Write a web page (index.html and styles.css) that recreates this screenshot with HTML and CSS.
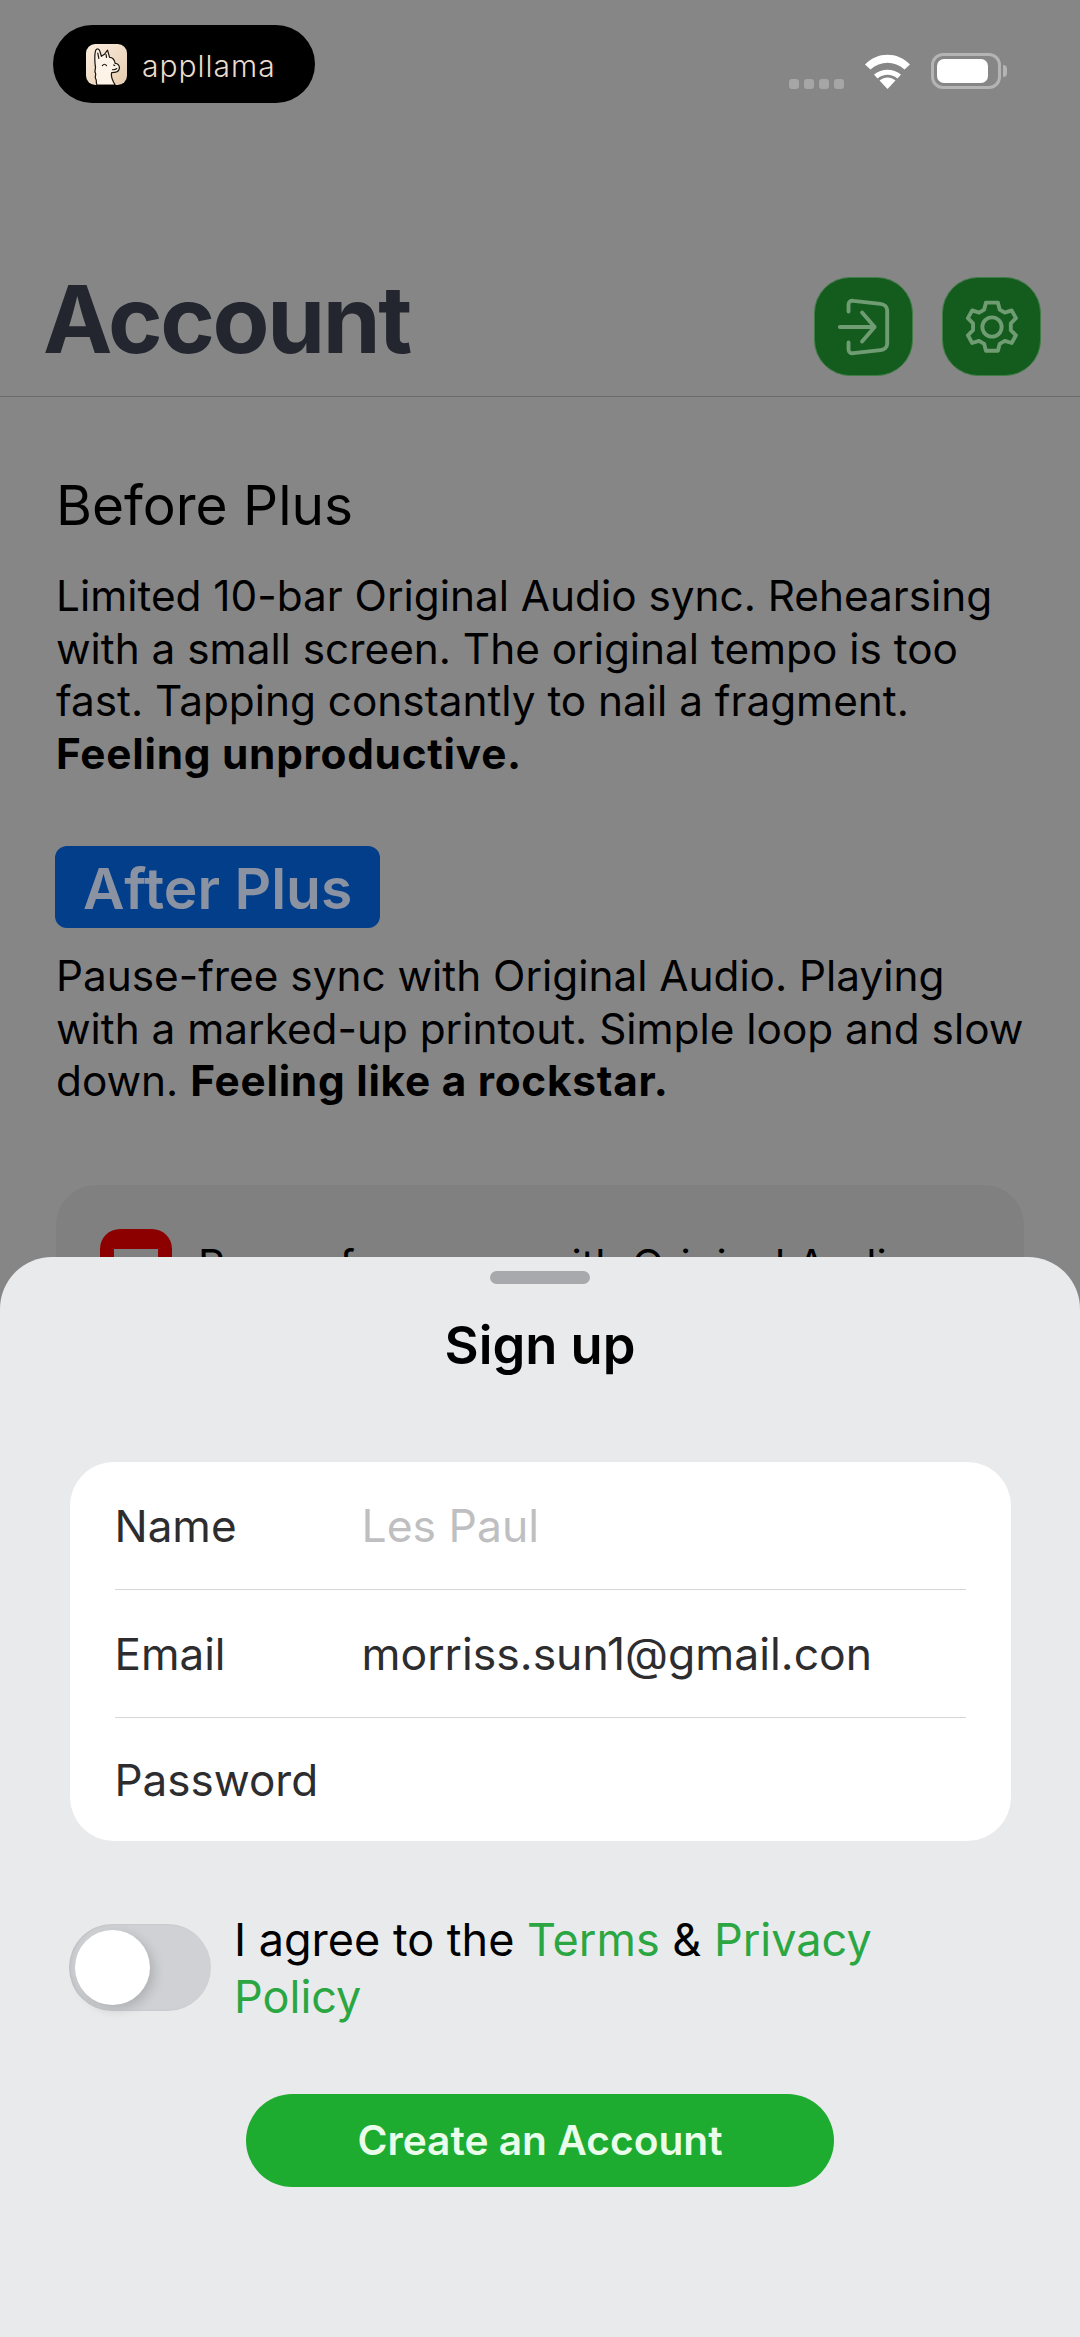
FILE: index.html
```html
<!DOCTYPE html>
<html lang="en">
<head>
    <meta charset="UTF-8">
    <meta name="viewport" content="width=device-width, initial-scale=1.0">
    <title>Account</title>
    <link rel="stylesheet" href="styles.css">
</head>
<body>
    <div class="screen">
        <div class="status">
            <div class="brand">
                <svg class="brand-icon" viewBox="0 0 40 40">
                    <defs>
                        <linearGradient id="tile" x1="0" y1="0" x2="1" y2="1">
                            <stop offset="0" stop-color="#fbeee0"/>
                            <stop offset="1" stop-color="#e6cbad"/>
                        </linearGradient>
                    </defs>
                    <rect width="40" height="40" rx="9" fill="url(#tile)"/>
                    <path d="M11 40C9 38 11 36 9.500 34C8 32 10.500 30 9 28C8 26 10 24 9 21C8.500 16 8.500 11 9 8C9.500 4 12.500 4 13.500 7L15 12L18 10L21 6L23 13C26 13 28 16 28.500 19C31 19 33 21 32.500 24C32 27 28 28 25 28C24 32 26 36 28.500 40Z" fill="#fdf3e6" stroke="#1d1712" stroke-width="1.200" stroke-linejoin="round"/>
                    <path d="M11.500 9L12.500 14M19.500 10L20 13M16 21q2-2.500 4 0M26 25q2 .5 4-1M27 20.500l1 .5" fill="none" stroke="#1d1712" stroke-width="1.200" stroke-linecap="round"/>
                </svg>
                <span class="brand-name">appllama</span>
            </div>
            <div class="status-icons">
                <div class="signal"><i></i><i></i><i></i><i></i></div>
                <svg class="wifi" viewBox="0 0 47 35">
                    <path d="M23.500 35L15.500 26.500C20.500 22.500 26.500 22.500 31.500 26.500Z" fill="#fff"/>
                    <path d="M10 20.500C17.500 14 29.500 14 37 20.500L33.500 24.500C27.300 19.500 19.700 19.500 13.500 24.500Z" fill="#fff"/>
                    <path d="M1 10.500C13.500 -2.500 33.500 -2.500 46 10.500L40.500 15.500C30.500 6.500 16.500 6.500 6.500 15.500Z" fill="#fff"/>
                </svg>
                <div class="battery"><span class="battery-fill"></span></div>
                <span class="battery-cap"></span>
            </div>
        </div>

        <div class="title-bar">
            <h1 class="title">Account</h1>
            <div class="title-actions">
                <div class="round-btn">
                    <svg viewBox="0 0 54 60">
                        <path d="M11 14V7C11 4 13 2.500 16 3L44 6C48 6.500 51 9 51 13V47C51 51 48 53.500 44 54L16 57C13 57.500 11 56 11 53V46" fill="none" stroke="#6f9c72" stroke-width="4" stroke-linecap="round" stroke-linejoin="round"/>
                        <path d="M2 30H38M25 15L38 30L25 45" fill="none" stroke="#6f9c72" stroke-width="4" stroke-linecap="round" stroke-linejoin="round"/>
                    </svg>
                </div>
                <div class="round-btn">
                    <svg viewBox="0 0 56 60">
                        <path d="M21 2H35L37 10L43 13.500L51 11L56 20L50 26V34L56 40L51 49L43 46.500L37 50L35 58H21L19 50L13 46.500L5 49L0 40L6 34V26L0 20L5 11L13 13.500L19 10Z" transform="translate(3 3) scale(.89)" fill="none" stroke="#6f9c72" stroke-width="4.500" stroke-linejoin="round"/>
                        <circle cx="28" cy="30" r="10" fill="none" stroke="#6f9c72" stroke-width="4"/>
                    </svg>
                </div>
            </div>
        </div>

        <div class="content">
            <h2 class="plain-head">Before Plus</h2>
            <p class="copy">Limited 10-bar Original Audio sync. Rehearsing with a small screen. The original tempo is too fast. Tapping constantly to nail a fragment. <b>Feeling unproductive.</b></p>
            <h2 class="badge-head">After Plus</h2>
            <p class="copy">Pause-free sync with Original Audio. Playing with a marked-up printout. Simple loop and slow down. <b>Feeling like a rockstar.</b></p>
            <div class="feature-card">
                <span class="feature-icon"></span>
                <span class="feature-text">Pause-free sync with Original Audio</span>
            </div>
        </div>

        <div class="sheet">
            <div class="handle"></div>
            <h2 class="sheet-title">Sign up</h2>
            <div class="form">
                <div class="form-row">
                    <span class="form-label">Name</span>
                    <span class="form-value placeholder">Les Paul</span>
                </div>
                <div class="form-row">
                    <span class="form-label">Email</span>
                    <span class="form-value">morriss.sun1@gmail.con</span>
                </div>
                <div class="form-row">
                    <span class="form-label">Password</span>
                </div>
            </div>
            <div class="agree">
                <div class="toggle"><span class="knob"></span></div>
                <p class="agree-text">I agree to the <a>Terms</a> &amp; <a>Privacy Policy</a></p>
            </div>
            <button class="create-btn">Create an Account</button>
        </div>
    </div>
</body>
</html>
```

FILE: styles.css
```css
* {
    box-sizing: border-box;
}
body {
    margin: 0;
    font-family: Inter, "Noto Sans", sans-serif;
    background-color: #868686;
}
.screen {
    position: relative;
    width: 1080px;
    height: 2337px;
    overflow: hidden;
    background-color: #868686;
}

/* status bar */
.status {
    display: flex;
    justify-content: space-between;
    align-items: flex-start;
    padding: 25px 73px 0 53px;
    height: 268px;
}
.brand {
    display: flex;
    align-items: center;
    width: 262px;
    height: 78px;
    padding-left: 33px;
    background-color: #000;
    border-radius: 39px;
}
.brand-icon {
    width: 41px;
    height: 41px;
}
.brand-name {
    margin: 4px 0 0 15px;
    font-weight: 300;
    font-size: 30px;
    letter-spacing: 1px;
    color: #e9dccd;
}
.status-icons {
    display: flex;
    align-items: center;
    height: 36px;
    margin-top: 28px;
}
.signal {
    display: flex;
    gap: 5px;
    margin-top: 26px;
    margin-right: 20px;
}
.signal i {
    width: 10px;
    height: 10px;
    border-radius: 3px;
    background-color: #a6a6a6;
}
.wifi {
    width: 47px;
    height: 35px;
    margin-right: 20px;
}
.battery {
    width: 70px;
    height: 36px;
    padding: 3px;
    border: 3px solid #b4b4b4;
    border-radius: 12px;
}
.battery-fill {
    display: block;
    width: 51px;
    height: 100%;
    background-color: #fff;
    border-radius: 7px;
}
.battery-cap {
    width: 4px;
    height: 12px;
    margin-left: 2px;
    background-color: #b4b4b4;
    border-radius: 0 4px 4px 0;
}

/* page title */
.title-bar {
    display: flex;
    justify-content: space-between;
    align-items: flex-end;
    height: 129px;
    padding: 0 39px 20px 43px;
    border-bottom: 1px solid #6b6b6b;
}
.title {
    margin: 0 0 10px;
    font-size: 93px;
    font-weight: 700;
    line-height: 1;
    letter-spacing: -2.4px;
    color: #23262e;
}
.title-actions {
    display: flex;
    gap: 29px;
}
.round-btn {
    display: flex;
    justify-content: center;
    align-items: center;
    width: 99px;
    height: 99px;
    background-color: #145c1e;
    border: 1px solid #3f7d47;
    border-radius: 36px;
}
.round-btn svg {
    width: 54px;
    height: 58px;
}

/* content behind the sheet */
.content {
    padding: 0 48px 0 56px;
}
.plain-head {
    margin: 76px 0 0;
    font-size: 55px;
    font-weight: 400;
    line-height: 64px;
    color: #000;
}
.copy {
    margin: 33px 0 0;
    font-size: 42.300px;
    line-height: 52.500px;
    color: #000;
}
.copy b {
    font-weight: 700;
    letter-spacing: 0.750px;
}
.badge-head {
    display: inline-block;
    margin: 66px 0 0 -1px;
    padding: 3px 28px 0;
    font-size: 57px;
    font-weight: 600;
    line-height: 79px;
    color: #8b93a3;
    background-color: #023e8a;
    border-radius: 12px;
}
.badge-head + .copy {
    margin-top: 22px;
}
.feature-card {
    display: flex;
    gap: 26px;
    margin-top: 77px;
    padding: 44px 0 0 44px;
    height: 200px;
    width: 968px;
    background-color: #808080;
    border-radius: 40px;
}
.feature-icon {
    width: 72px;
    height: 72px;
    border: 14px solid #8d0000;
    border-top-width: 20px;
    border-radius: 20px;
}
.feature-text {
    font-size: 42px;
    line-height: 72px;
    color: #000;
}

/* sign up sheet */
.sheet {
    position: absolute;
    left: 0;
    right: 0;
    top: 1257px;
    bottom: 0;
    display: flex;
    flex-direction: column;
    align-items: center;
    padding-top: 14px;
    background-color: #e9eaec;
    border-radius: 52px 52px 0 0;
}
.handle {
    width: 100px;
    height: 13px;
    background-color: #a8a9ad;
    border-radius: 7px;
}
.sheet-title {
    margin: 31px 0 0;
    font-size: 52.500px;
    font-weight: 600;
    line-height: 60px;
    color: #000;
}
.form {
    width: 941px;
    margin-top: 87px;
    padding: 0 45px;
    background-color: #fff;
    border-radius: 44px;
}
.form-row {
    display: flex;
    align-items: center;
    height: 128px;
    border-bottom: 1px solid #d6d6d8;
}
.form-row:last-child {
    height: 123px;
    border-bottom: none;
}
.form-label {
    width: 247px;
    font-size: 44px;
    color: #2d2d2f;
}
.form-value {
    font-size: 44.500px;
    color: #2d2d2f;
}
.placeholder {
    color: #bfbfc1;
}
.agree {
    display: flex;
    align-self: flex-start;
    gap: 23px;
    margin: 70px 0 0 69px;
}
.toggle {
    flex-shrink: 0;
    width: 142px;
    height: 87px;
    margin-top: 13px;
    padding: 6px;
    background-color: #d0d1d5;
    border-radius: 44px;
    box-shadow: inset 2px 0 3px rgba(0, 0, 0, 0.08);
}
.knob {
    display: block;
    width: 75px;
    height: 75px;
    background-color: #fff;
    border-radius: 50%;
    box-shadow: 4px 4px 12px rgba(0, 0, 0, 0.16);
}
.agree-text {
    width: 700px;
    margin: 0;
    font-size: 45px;
    line-height: 57px;
    color: #000;
}
.agree-text a {
    color: #2aa742;
}
.create-btn {
    width: 588px;
    height: 93px;
    margin-top: 69px;
    font-family: inherit;
    font-size: 40.700px;
    font-weight: 600;
    color: #eafcea;
    background-color: #1dab30;
    border: none;
    border-radius: 47px;
}
```
